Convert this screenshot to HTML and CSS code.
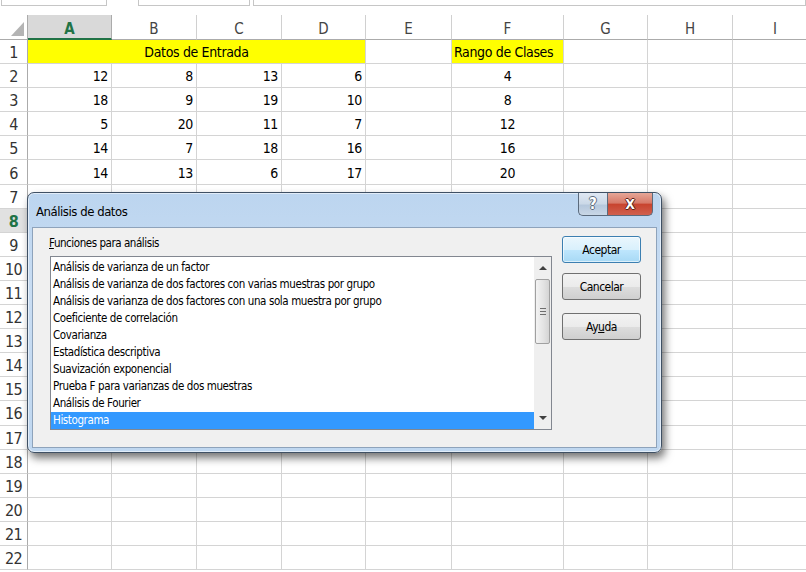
FILE: index.html
```html
<!DOCTYPE html>
<html lang="es">
<head>
<meta charset="utf-8">
<title>Análisis de datos</title>
<link rel="stylesheet" href="styles.css">
</head>
<body>
<div class="topstrip">
  <div class="tbox b1"></div>
  <div class="tbox b2"></div>
  <div class="tbox b3"></div>
</div>
<div class="sheet">
  <div class="corner"><span class="tri"></span></div>
  <div class="ch sel">A</div><div class="ch">B</div><div class="ch">C</div><div class="ch">D</div><div class="ch">E</div><div class="ch">F</div><div class="ch">G</div><div class="ch">H</div><div class="ch">I</div>

  <div class="rh">1</div><div class="c yellow merged">Datos de Entrada</div><div class="c"></div><div class="c yellow left">Rango de Clases</div><div class="c"></div><div class="c"></div><div class="c"></div>
  <div class="rh">2</div><div class="c n">12</div><div class="c n">8</div><div class="c n">13</div><div class="c n">6</div><div class="c"></div><div class="c m">4</div><div class="c"></div><div class="c"></div><div class="c"></div>
  <div class="rh">3</div><div class="c n">18</div><div class="c n">9</div><div class="c n">19</div><div class="c n">10</div><div class="c"></div><div class="c m">8</div><div class="c"></div><div class="c"></div><div class="c"></div>
  <div class="rh">4</div><div class="c n">5</div><div class="c n">20</div><div class="c n">11</div><div class="c n">7</div><div class="c"></div><div class="c m">12</div><div class="c"></div><div class="c"></div><div class="c"></div>
  <div class="rh">5</div><div class="c n">14</div><div class="c n">7</div><div class="c n">18</div><div class="c n">16</div><div class="c"></div><div class="c m">16</div><div class="c"></div><div class="c"></div><div class="c"></div>
  <div class="rh">6</div><div class="c n">14</div><div class="c n">13</div><div class="c n">6</div><div class="c n">17</div><div class="c"></div><div class="c m">20</div><div class="c"></div><div class="c"></div><div class="c"></div>
  <div class="rh">7</div><div class="c"></div><div class="c"></div><div class="c"></div><div class="c"></div><div class="c"></div><div class="c"></div><div class="c"></div><div class="c"></div><div class="c"></div>
  <div class="rh selr">8</div><div class="c"></div><div class="c"></div><div class="c"></div><div class="c"></div><div class="c"></div><div class="c"></div><div class="c"></div><div class="c"></div><div class="c"></div>
  <div class="rh">9</div><div class="c"></div><div class="c"></div><div class="c"></div><div class="c"></div><div class="c"></div><div class="c"></div><div class="c"></div><div class="c"></div><div class="c"></div>
  <div class="rh">10</div><div class="c"></div><div class="c"></div><div class="c"></div><div class="c"></div><div class="c"></div><div class="c"></div><div class="c"></div><div class="c"></div><div class="c"></div>
  <div class="rh">11</div><div class="c"></div><div class="c"></div><div class="c"></div><div class="c"></div><div class="c"></div><div class="c"></div><div class="c"></div><div class="c"></div><div class="c"></div>
  <div class="rh">12</div><div class="c"></div><div class="c"></div><div class="c"></div><div class="c"></div><div class="c"></div><div class="c"></div><div class="c"></div><div class="c"></div><div class="c"></div>
  <div class="rh">13</div><div class="c"></div><div class="c"></div><div class="c"></div><div class="c"></div><div class="c"></div><div class="c"></div><div class="c"></div><div class="c"></div><div class="c"></div>
  <div class="rh">14</div><div class="c"></div><div class="c"></div><div class="c"></div><div class="c"></div><div class="c"></div><div class="c"></div><div class="c"></div><div class="c"></div><div class="c"></div>
  <div class="rh">15</div><div class="c"></div><div class="c"></div><div class="c"></div><div class="c"></div><div class="c"></div><div class="c"></div><div class="c"></div><div class="c"></div><div class="c"></div>
  <div class="rh">16</div><div class="c"></div><div class="c"></div><div class="c"></div><div class="c"></div><div class="c"></div><div class="c"></div><div class="c"></div><div class="c"></div><div class="c"></div>
  <div class="rh">17</div><div class="c"></div><div class="c"></div><div class="c"></div><div class="c"></div><div class="c"></div><div class="c"></div><div class="c"></div><div class="c"></div><div class="c"></div>
  <div class="rh">18</div><div class="c"></div><div class="c"></div><div class="c"></div><div class="c"></div><div class="c"></div><div class="c"></div><div class="c"></div><div class="c"></div><div class="c"></div>
  <div class="rh">19</div><div class="c"></div><div class="c"></div><div class="c"></div><div class="c"></div><div class="c"></div><div class="c"></div><div class="c"></div><div class="c"></div><div class="c"></div>
  <div class="rh">20</div><div class="c"></div><div class="c"></div><div class="c"></div><div class="c"></div><div class="c"></div><div class="c"></div><div class="c"></div><div class="c"></div><div class="c"></div>
  <div class="rh">21</div><div class="c"></div><div class="c"></div><div class="c"></div><div class="c"></div><div class="c"></div><div class="c"></div><div class="c"></div><div class="c"></div><div class="c"></div>
  <div class="rh">22</div><div class="c"></div><div class="c"></div><div class="c"></div><div class="c"></div><div class="c"></div><div class="c"></div><div class="c"></div><div class="c"></div><div class="c"></div>
</div>

<div class="dialog">
  <div class="titlebar">
    <span class="title">Análisis de datos</span>
    <div class="capbtns">
      <div class="cb help">?</div>
      <div class="cb close">X</div>
    </div>
  </div>
  <div class="panel">
    <div class="leftcol">
      <div class="label"><u>F</u>unciones para análisis</div>
      <div class="list">
        <div class="items">
          <div class="item">Análisis de varianza de un factor</div>
          <div class="item">Análisis de varianza de dos factores con varias muestras por grupo</div>
          <div class="item">Análisis de varianza de dos factores con una sola muestra por grupo</div>
          <div class="item">Coeficiente de correlación</div>
          <div class="item">Covarianza</div>
          <div class="item">Estadística descriptiva</div>
          <div class="item">Suavización exponencial</div>
          <div class="item">Prueba F para varianzas de dos muestras</div>
          <div class="item">Análisis de Fourier</div>
          <div class="item selected">Histograma</div>
        </div>
        <div class="scroll">
          <div class="sbtn up"><span class="arr-up"></span></div>
          <div class="thumb"><span class="grip"></span></div>
          <div class="track"></div>
          <div class="sbtn down"><span class="arr-down"></span></div>
        </div>
      </div>
    </div>
    <div class="btns">
      <div class="btn default">Aceptar</div>
      <div class="btn">Cancelar</div>
      <div class="btn ayuda">Ay<u>u</u>da</div>
    </div>
  </div>
</div>
</body>
</html>
```

FILE: styles.css
```css
html, body {
  margin: 0;
  padding: 0;
  background: #ffffff;
}
body {
  width: 806px;
  height: 572px;
  overflow: hidden;
  position: relative;
  font-family: "DejaVu Sans Condensed", "Liberation Sans Narrow", "Liberation Sans", sans-serif;
  font-stretch: condensed;
  color: #000;
}

/* top strip (formula bar bottoms) */
.topstrip {
  height: 15px;
  display: flex;
  align-items: flex-start;
}
.tbox {
  height: 6px;
  border: 1px solid #c6c6c6;
  border-top: none;
  box-sizing: border-box;
  background: #fff;
}
.b1 { width: 106px; margin-left: 1px; }
.b2 { width: 112px; margin-left: 31px; }
.b3 { flex: 1; margin-left: 3px; }

/* sheet grid */
.sheet {
  display: grid;
  grid-template-columns: 28px 84px 85px 85px 84px 86px 112px 84px 85px 85px;
  grid-template-rows: 25px repeat(22, 24.1px);
  font-size: 14px;
  letter-spacing: -0.35px;
}
.corner {
  border-right: 1px solid #ababab;
  border-bottom: 1px solid #ababab;
  position: relative;
}
.tri {
  position: absolute;
  right: 3px;
  bottom: 3px;
  width: 0;
  height: 0;
  border-left: 13px solid transparent;
  border-bottom: 14px solid #b4b4b4;
}
.ch {
  border-right: 1px solid #d0d0d0;
  border-bottom: 1px solid #ababab;
  display: flex;
  align-items: center;
  justify-content: center;
  color: #444;
  font-size: 15px;
  letter-spacing: 0;
  padding-top: 4px;
  box-sizing: border-box;
}
.ch.sel {
  background: #d9d9d9;
  color: #217346;
  font-weight: bold;
  border-bottom: 2px solid #217346;
  border-right-color: #ababab;
}
.rh {
  border-right: 1px solid #ababab;
  border-bottom: 1px solid #d4d4d4;
  display: flex;
  align-items: center;
  justify-content: center;
  color: #333;
  font-size: 16px;
  letter-spacing: -0.6px;
  box-sizing: border-box;
  padding-top: 2px;
}
.rh.selr {
  background: #e1e1e1;
  color: #217346;
  font-weight: bold;
}
.c {
  border-right: 1px solid #d4d4d4;
  border-bottom: 1px solid #d4d4d4;
  box-sizing: border-box;
  display: flex;
  align-items: flex-end;
  padding: 0 3px 3px 3px;
  white-space: nowrap;
  color: #000;
}
.n { justify-content: flex-end; }
.m { justify-content: center; }
.left { justify-content: flex-start; padding-left: 2px; }
.yellow { background: #ffff00; }
.merged { grid-column: span 4; justify-content: center; }

/* dialog */
.dialog {
  position: absolute;
  left: 27px;
  top: 192px;
  width: 635px;
  height: 261px;
  box-sizing: border-box;
  border: 1px solid #3f5064;
  border-radius: 7px;
  background: linear-gradient(180deg, #bcd5ef 0%, #c9ddf3 40%, #bfd7f0 100%);
  box-shadow: 3px 5px 8px rgba(0, 0, 0, 0.55), inset 0 0 0 1px rgba(255, 255, 255, 0.55);
  display: flex;
  flex-direction: column;
}
.titlebar {
  height: 34px;
  display: flex;
  justify-content: space-between;
  align-items: flex-start;
  flex: none;
}
.title {
  font-size: 13px;
  letter-spacing: -0.45px;
  line-height: 17px;
  padding: 10px 0 0 8px;
  color: #000;
}
.capbtns {
  display: flex;
  margin-right: 8px;
}
.cb {
  height: 23px;
  box-sizing: border-box;
  border: 1px solid #5b6a7c;
  border-top: none;
  display: flex;
  align-items: center;
  justify-content: center;
  font-family: "DejaVu Sans", sans-serif;
  font-weight: bold;
  color: #fff;
}
.help {
  width: 29px;
  border-radius: 0 0 0 5px;
  border-right: none;
  background: linear-gradient(180deg, #dfe8f3 0%, #cbd8e7 50%, #b5c7dc 55%, #c9d7e6 100%);
  font-size: 15px;
  text-shadow: -1px 0 #5c6b7a, 1px 0 #5c6b7a, 0 -1px #5c6b7a, 0 1px #5c6b7a;
}
.close {
  width: 46px;
  border-radius: 0 0 5px 0;
  background: linear-gradient(180deg, #e6a697 0%, #d77a69 45%, #c8442f 52%, #d0604e 100%);
  font-size: 14px;
  text-shadow: -1px 0 #5a1d14, 1px 0 #5a1d14, 0 -1px #5a1d14, 0 1px #5a1d14;
}
.panel {
  flex: 1;
  margin: 0 4px 4px 4px;
  background: #f0f0f0;
  border: 1px solid #8ea3bb;
  display: flex;
  padding: 7px 14px 0 17px;
  gap: 10px;
}
.leftcol {
  display: flex;
  flex-direction: column;
}
.label {
  font-size: 11.5px;
  letter-spacing: -0.45px;
  line-height: 16px;
  margin-left: -1px;
  margin-bottom: 5px;
}
.list {
  width: 502px;
  height: 174px;
  box-sizing: border-box;
  border: 1px solid #828790;
  background: #fff;
  display: flex;
}
.items {
  flex: 1;
  padding-top: 2px;
}
.item {
  height: 17px;
  line-height: 17px;
  font-size: 11.5px;
  letter-spacing: -0.4px;
  padding-left: 2px;
  white-space: nowrap;
}
.item.selected {
  background: #3399ff;
  color: #fff;
}
.scroll {
  width: 17px;
  background: #efefef;
  display: flex;
  flex-direction: column;
}
.sbtn {
  height: 22px;
  display: flex;
  align-items: center;
  justify-content: center;
  flex: none;
}
.arr-up {
  width: 0; height: 0;
  border-left: 4px solid transparent;
  border-right: 4px solid transparent;
  border-bottom: 4px solid #404040;
}
.arr-down {
  width: 0; height: 0;
  border-left: 4px solid transparent;
  border-right: 4px solid transparent;
  border-top: 4px solid #404040;
}
.thumb {
  height: 65px;
  margin: 0 1px;
  box-sizing: border-box;
  border: 1px solid #a0a0a0;
  border-radius: 2px;
  background: linear-gradient(90deg, #f3f3f3 0%, #e2e2e2 60%, #d4d4d4 100%);
  display: flex;
  align-items: center;
  justify-content: center;
  flex: none;
}
.grip {
  width: 6px;
  height: 7px;
  background: repeating-linear-gradient(180deg, #6e6e6e 0 1px, transparent 1px 3px);
}
.track { flex: 1; }
.btns {
  display: flex;
  flex-direction: column;
  padding-top: 1px;
}
.btn {
  width: 79px;
  height: 27px;
  box-sizing: border-box;
  border: 1px solid #707070;
  border-radius: 3px;
  background: linear-gradient(180deg, #f3f3f3 0%, #ebebeb 50%, #dddddd 52%, #cfcfcf 100%);
  font-size: 12px;
  letter-spacing: -0.5px;
  display: flex;
  align-items: center;
  justify-content: center;
  margin-bottom: 10px;
}
.btn.default {
  border-color: #3c7fb1;
  background: linear-gradient(180deg, #eaf6fd 0%, #d9f0fc 50%, #bee6fd 52%, #a7d9f5 100%);
  box-shadow: inset 0 0 0 1px rgba(255, 255, 255, 0.6);
}
.btn.ayuda { margin-top: 3px; }
```
